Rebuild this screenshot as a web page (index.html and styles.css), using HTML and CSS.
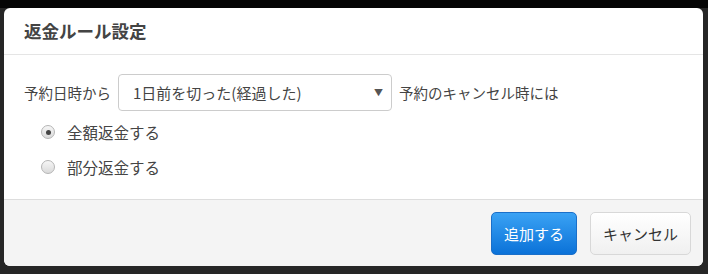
FILE: index.html
```html
<!DOCTYPE html>
<html lang="ja">
<head>
<meta charset="utf-8">
<link rel="stylesheet" href="styles.css">
</head>
<body>
<div class="modal">
  <div class="modal-header"><h3 class="title">返金ルール設定</h3></div>
  <div class="modal-body">
    <div class="row">
      <span class="label">予約日時から</span>
      <div class="select"><span>1日前を切った(経過した)</span><span class="arrow">▼</span></div>
      <span class="label">予約のキャンセル時には</span>
    </div>
    <div class="radios">
      <label class="radio"><span class="dot checked"></span>全額返金する</label>
      <label class="radio"><span class="dot"></span>部分返金する</label>
    </div>
  </div>
  <div class="modal-footer">
    <button class="btn btn-primary">追加する</button>
    <button class="btn btn-default">キャンセル</button>
  </div>
</div>
</body>
</html>
```
FILE: styles.css
```css
html, body { margin: 0; padding: 0; }
body {
  width: 708px; height: 274px; overflow: hidden;
  background: linear-gradient(#050505 0, #050505 8px, #262626 8px);
  font-family: "Noto Sans CJK JP", "Noto Sans", sans-serif;
  color: #333;
}
.modal {
  margin: 8px 0 0 4px;
  width: 699px; height: 258px;
  background: #fff;
  border-radius: 6px;
  overflow: hidden;
  display: flex; flex-direction: column;
}
.modal-header {
  height: 47px; box-sizing: border-box;
  border-bottom: 1px solid #e5e5e5;
  padding: 0 20px;
  display: flex; align-items: center;
}
.title { margin: 0; font-size: 17.5px; font-weight: bold; color: #444; line-height: 1; }
.modal-body { flex: 1; padding: 19px 20px 0 20px; }
.row { display: flex; align-items: center; gap: 7px; font-size: 14.5px; color: #444; }
.select {
  width: 274px; height: 37px; box-sizing: border-box;
  border: 1px solid #ccc; border-radius: 4px;
  display: flex; align-items: center; justify-content: space-between;
  padding: 0 8px 0 14px; font-size: 15px;
}
.arrow { font-size: 9px; color: #555; }
.radios { display: flex; flex-direction: column; gap: 13px; padding: 10px 0 0 17px; font-size: 15.5px; color: #444; }
.radio { display: flex; align-items: center; gap: 12px; height: 22px; }
.dot {
  width: 14px; height: 14px; border-radius: 50%;
  border: 1px solid #b5b5b5; background: linear-gradient(#f6f6f6, #dadada);
  box-sizing: border-box; position: relative;
}
.dot.checked::after {
  content: ""; position: absolute; left: 3.5px; top: 3.5px;
  width: 5px; height: 5px; border-radius: 50%; background: #444;
}
.modal-footer {
  height: 67px; box-sizing: border-box;
  border-top: 1px solid #ddd; background: #f4f4f4;
  display: flex; align-items: center; justify-content: flex-end;
  gap: 13px; padding: 0 12px 0 0;
}
.btn {
  height: 43px; border-radius: 5px; font-family: inherit; font-size: 15px;
  padding: 0 12px; cursor: pointer;
}
.btn-primary {
  width: 86px; color: #fff; border: 1px solid #1a6fc9;
  background: linear-gradient(#3aa2f4, #0b72d8);
}
.btn-default {
  width: 101px; color: #333; border: 1px solid #d8d8d8;
  background: linear-gradient(#fff, #f0f0f0);
}
```
